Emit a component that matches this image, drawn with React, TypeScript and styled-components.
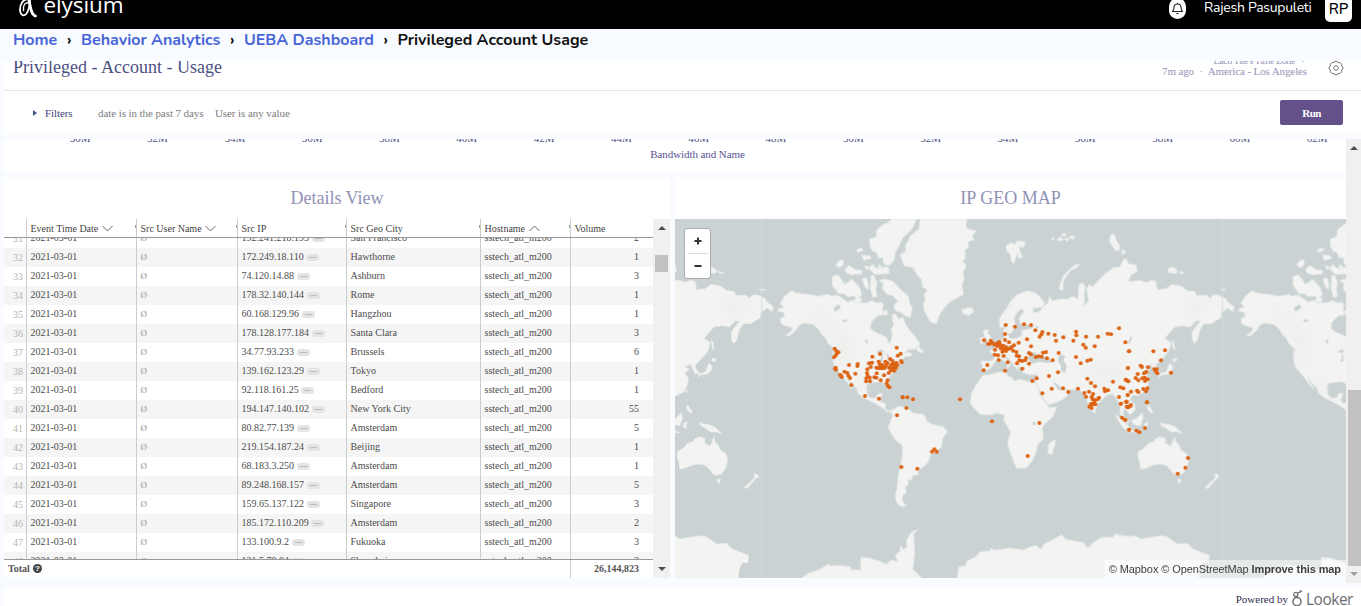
import React from "react";
import styled, { createGlobalStyle } from "styled-components";

const Global = createGlobalStyle`
  * { box-sizing: border-box; }
  html, body { margin: 0; padding: 0; overflow: hidden; background: #f8fbff; }
`;

const serif = `"Liberation Serif", "Times New Roman", serif`;
const rounded = `Nunito, Lato, sans-serif`;

const Page = styled.div`
  width: 1361px;
  height: 606px;
  overflow: hidden;
  display: flex;
  flex-direction: column;
  background: #f8fbff;
  font-family: ${serif};
`;

/* Top bar */
const TopBar = styled.header`
  height: 29px;
  flex: none;
  background: #000;
  color: #fff;
  display: flex;
  align-items: flex-start;
  overflow: hidden;
  padding-left: 18px;
`;
const LogoMark = styled.svg`
  width: 21px;
  height: 18px;
  flex: none;
`;
const Brand = styled.span`
  margin: -9px 0 0 4.5px;
  flex: 1;
  font: 400 22.5px/28px "Open Sans", sans-serif;
  letter-spacing: -0.1px;
`;
const BellBadge = styled.div`
  width: 17px;
  height: 21px;
  margin: -2px 18px 0 0;
  border-radius: 9px;
  background: #fff;
  display: flex;
  align-items: center;
  justify-content: center;
`;
const UserName = styled.span`
  width: 121px;
  white-space: nowrap;
  font: 400 14px/16px ${rounded};
  letter-spacing: -0.27px;
`;
const Avatar = styled.div`
  width: 27px;
  height: 26px;
  margin: -4px 9px 0 0;
  border-radius: 5px;
  background: #fff;
  color: #000;
  text-align: center;
  font: 500 15px/26px ${rounded};
`;

/* Breadcrumb */
const Crumbs = styled.nav`
  height: 32px;
  flex: none;
  padding-left: 13px;
  display: flex;
  font: 700 16px/22px ${rounded};
`;
const Crumb = styled.span<{ $w: number; $current?: boolean }>`
  width: ${(p) => p.$w}px;
  white-space: nowrap;
  color: ${(p) => (p.$current ? "#111" : "#4865d8")};
`;
const Separator = styled.span`
  width: 23px;
  padding-left: 9px;
  color: #111;
`;

/* Dashboard header */
const DashHeader = styled.section`
  height: 30px;
  flex: none;
  margin-left: 4px;
  padding-left: 9px;
  overflow: hidden;
  display: flex;
  background: #fff;
  border-bottom: 1px solid #e3e5e8;
`;
const DashTitle = styled.h1`
  margin: 0;
  flex: 1;
  font: 400 18px/13px ${serif};
  color: #4c5183;
`;
const ZoneBlock = styled.div`
  width: 148px;
  margin: -6px 20px 0 0;
  display: flex;
  flex-direction: column;
  align-items: flex-end;
  color: #9496b6;
  font-size: 11px;
  line-height: 12px;
  letter-spacing: -0.12px;
  white-space: nowrap;
`;
const ZoneSmall = styled.div`
  height: 10px;
  padding: 1px 1px 0 0;
  font-size: 10px;
  line-height: 11px;
  letter-spacing: -0.4px;
  display: flex;
  gap: 5px;
  align-items: center;
`;
const Dot = styled.span`
  margin: 0 2.8px;
`;
const GearButton = styled.span`
  width: 34px;
`;

const FilterBar = styled.section`
  height: 43px;
  flex: none;
  margin-left: 4px;
  padding: 0 18px 0 29px;
  display: flex;
  align-items: center;
  background: #fff;
  font-size: 11px;
  letter-spacing: -0.08px;
  color: #7c7c7c;
  white-space: nowrap;
`;
const Caret = styled.i`
  border-left: 4px solid #3f5590;
  border-top: 3.5px solid transparent;
  border-bottom: 3.5px solid transparent;
`;
const FilterLabel = styled.span`
  width: 53px;
  margin-left: 8px;
  color: #41437c;
`;
const FilterText = styled.span<{ $w?: number }>`
  ${(p) => (p.$w ? `width: ${p.$w}px;` : "flex: 1;")}
`;
const RunButton = styled.button`
  width: 63px;
  height: 25px;
  border: 0;
  padding: 0;
  border-radius: 2px;
  background: #64518a;
  color: #fff;
  font: 700 11px/26px ${serif};
  letter-spacing: -0.6px;
`;

/* Scrolling dashboard area */
const Body = styled.main`
  height: 444px;
  flex: none;
  margin-top: 5px;
  display: flex;
`;
const Tiles = styled.div`
  width: 1346px;
  padding-left: 4px;
`;
const AxisTile = styled.section`
  height: 34px;
  overflow: hidden;
  background: #fff;
  color: #4c4f7c;
  font-size: 11px;
`;
const AxisTicks = styled.div`
  height: 12px;
  margin-top: -7px;
  padding-left: 37.5px;
  display: flex;
  line-height: 12px;
`;
const Tick = styled.span`
  width: 77.32px;
  flex: none;
  text-align: center;
`;
const AxisTitle = styled.div`
  padding: 4px 0 0 45px;
  line-height: 13px;
  letter-spacing: -0.08px;
  text-align: center;
  color: #5a5290;
`;
const TileRow = styled.div`
  display: flex;
  gap: 5px;
  margin-top: 5px;
`;
const Tile = styled.section<{ $w: number }>`
  width: ${(p) => p.$w}px;
  height: 400px;
  background: #fff;
`;
const TileTitle = styled.h2`
  margin: 0;
  height: 41px;
  text-align: center;
  font: 400 18px/41px ${serif};
  color: #9092b6;
`;

/* Details table */
const TableWrap = styled.div`
  display: flex;
  height: 359px;
`;
const Table = styled.div`
  width: 649px;
  font-size: 10px;
  color: #555;
`;
const cols = [22, 110, 101, 109, 134, 90, 83];
const HeadRow = styled.div`
  height: 19px;
  display: grid;
  grid-template-columns: ${cols.map((c) => c + "px").join(" ")};
  border-bottom: 1px solid #999;
  color: #444;
`;
const HeadCell = styled.div<{ $first?: boolean; $tick?: boolean }>`
  display: flex;
  align-items: center;
  gap: 3.5px;
  padding-left: 3.5px;
  border-left: ${(p) => (p.$first ? "0" : "1px solid #ccc")};
  white-space: nowrap;
  &::after {
    content: "";
    display: ${(p) => (p.$tick ? "block" : "none")};
    width: 1px;
    height: 3px;
    margin: -3px 0 0 auto;
    background: #999;
  }
`;
const Rows = styled.div`
  height: 321px;
  overflow: hidden;
`;
const Shift = styled.div`
  margin-top: -9px;
`;
const Row = styled.div<{ $alt: boolean }>`
  height: 19px;
  display: grid;
  grid-template-columns: ${cols.map((c) => c + "px").join(" ")};
  line-height: 17px;
  background: ${(p) => (p.$alt ? "#f5f5f5" : "#fff")};
`;
const Cell = styled.div<{ $muted?: boolean; $right?: boolean }>`
  padding: 0 ${(p) => (p.$right ? 14 : 0)}px ${(p) => (p.$muted ? 0 : 2)}px 3.5px;
  display: flex;
  align-items: center;
  border-left: 1px solid #ccc;
  justify-content: ${(p) => (p.$right ? "flex-end" : "flex-start")};
  color: ${(p) => (p.$muted ? "#999" : "#4c4c4c")};
  font-size: ${(p) => (p.$muted ? 9 : 10)}px;
  white-space: nowrap;
`;
const Num = styled.div`
  padding: 1px 3px 0 0;
  text-align: right;
  color: #b4b4b4;
`;
const Pill = styled.span`
  width: 13px;
  height: 7px;
  margin: 2px 0 0 2.5px;
  border-radius: 3px;
  background: #e4e4e4;
  display: flex;
  align-items: center;
  justify-content: center;
  &::after {
    content: "";
    width: 7px;
    height: 1px;
    background: #bcbcbc;
  }
`;
const TotalRow = styled.div`
  height: 19px;
  border-top: 1px solid #999;
  display: flex;
  font-weight: 700;
  line-height: 18px;
`;
const TotalLabel = styled.div`
  width: 566px;
  padding: 0 0 1px 4px;
  display: flex;
  align-items: center;
  gap: 3px;
`;
const TotalValue = styled.div`
  width: 83px;
  padding-right: 14px;
  border-left: 1px solid #ccc;
  text-align: right;
`;
const Help = styled.span`
  width: 9px;
  height: 9px;
  margin-top: -1px;
  border-radius: 50%;
  background: #444;
  color: #fff;
  text-align: center;
  font: 700 8px/9px "Liberation Sans", sans-serif;
`;

/* Scrollbars */
const Scroll = styled.div<{ $w: number }>`
  width: ${(p) => p.$w}px;
  flex: none;
  display: flex;
  flex-direction: column;
  align-items: center;
  background: #f0f0f0;
`;
const Arrow = styled.i<{ $down?: boolean; $c: string; $top: number }>`
  margin-top: ${(p) => p.$top}px;
  border-left: 4px solid transparent;
  border-right: 4px solid transparent;
  border-${(p) => (p.$down ? "top" : "bottom")}: 4px solid ${(p) => p.$c};
`;
const Thumb = styled.div<{ $top: number; $h: number; $left?: number }>`
  width: 13px;
  height: ${(p) => p.$h}px;
  margin: ${(p) => p.$top}px 0 0 ${(p) => p.$left ?? 0}px;
  background: #c1c1c1;
`;

/* Map */
const MapBox = styled.div`
  position: relative;
  height: 359px;
  background: #cad2d3;
`;
const MapSvg = styled.svg`
  display: block;
  width: 671px;
  height: 359px;
`;
const ZoomControl = styled.div`
  position: absolute;
  left: 9px;
  top: 9px;
  width: 27px;
  height: 51px;
  padding: 0 2px;
  border: 1px solid #a9aeaf;
  border-radius: 3px;
  background: #fff;
`;
const ZoomKey = styled.div<{ $line?: boolean }>`
  height: 24.5px;
  display: flex;
  align-items: center;
  justify-content: center;
  border-bottom: ${(p) => (p.$line ? "1px solid #ddd" : "0")};
`;
const Attribution = styled.div`
  position: absolute;
  right: 0;
  bottom: 0;
  width: 241px;
  height: 18px;
  padding-right: 5px;
  background: rgba(255, 255, 255, 0.5);
  color: #404040;
  text-align: right;
  white-space: nowrap;
  letter-spacing: -0.1px;
  font: 400 11px/18px "Liberation Sans", Arial, sans-serif;
`;

const Footer = styled.footer`
  height: 19px;
  margin: 4px 0 0 4px;
  padding: 4px 9px 0 0;
  background: #fff;
  display: flex;
  align-items: center;
  justify-content: flex-end;
  font-size: 11px;
  color: #2f3050;
  white-space: nowrap;
`;
const LookerMark = styled.svg`
  width: 13px;
  height: 19px;
  margin: -1px 0 0 3px;
`;
const LookerName = styled.span`
  width: 46px;
  margin: 1px 0 0 2px;
  font: 400 15.5px/19px "Open Sans", sans-serif;
  letter-spacing: -0.5px;
  color: #6b6e73;
`;

type Region = { at: [number, number]; shapes: string[] };

/* Map units are one third of a pixel; each region has its own origin. */
const land: Region[] = [
  {
    at: [0, -12],
    shapes: [
      "350,226 360,233 375,236 400,238 430,244 448,240 462,238 466,244 485,240 500,248 518,262 530,256 545,263 575,264 590,256 604,264 618,262 626,270 622,280 626,300 608,302 598,312 588,322 586,340 598,350 620,360 636,368 640,385 646,384 652,360 648,345 657,330 652,316 652,298 660,296 672,312 684,306 690,325 705,348 715,358 730,378 735,388 722,402 700,404 688,414 700,412 712,416 706,424 690,425 680,434 672,452 660,467 648,480 640,492 646,516 638,520 630,505 618,500 600,502 580,504 574,515 576,538 588,550 604,547 608,537 622,534 616,552 618,562 632,566 631,582 640,588 655,582 652,590 636,590 622,578 600,565 585,558 565,548 548,534 545,520 530,506 518,488 512,480 520,498 534,522 526,516 508,490 500,480 488,468 478,454 474,434 474,412 478,402 460,386 452,370 440,358 430,342 415,328 385,324 370,332 366,342 345,362 332,362 348,350 352,338 330,332 318,326 316,310 330,304 326,292 308,288 312,280 326,278 316,264 330,242",
      "690,12 650,12 640,22 625,28 605,45 604,65 584,72 584,92 592,108 604,112 610,128 624,128 626,148 645,150 658,135 660,115 672,92 682,70 712,40 725,12",
      "472,184 488,180 497,190 508,208 520,202 530,192 542,204 554,218 560,238 548,252 536,242 518,245 505,236 490,236 480,222 472,212",
      "482,150 492,138 504,134 506,150 492,158", "510,162 522,152 542,164 560,166 560,176 530,180 514,174",
      "562,192 574,188 580,208 578,224 568,214", "588,182 596,180 606,204 602,222 606,244 594,248 586,222",
      "580,160 592,148 604,160 640,154 642,176 600,178", "545,104 560,98 564,106 548,112", "560,120 584,122 588,130 566,136",
      "612,196 630,192 652,198 664,210 684,230 700,244 704,268 712,276 706,308 690,302 678,292 662,288 656,272 668,258 650,240 636,238 622,220 626,206", "626,288 636,286 638,298 628,300", "535,258 546,246 560,250 556,262",
      "610,164 620,154 612,148", "568,152 580,154 576,166", "108,164 124,166 122,174 108,174", "130,172 146,172 140,176",
    ],
  },
  {
    at: [675, -12],
    shapes: [
      "60,12 200,12 198,38 212,44 230,46 216,62 222,74 204,80 206,98 194,104 196,130 188,138 198,152 190,170 192,194 186,210 190,238 168,250 148,262 132,280 118,300 110,326 92,322 82,304 74,290 70,270 76,254 72,240 82,224 68,216 64,192 50,178 40,158 12,152 6,134 0,120 18,108 16,92 32,62 58,40",
      "184,280 192,284 200,278 216,278 222,290 206,301 190,296", "250,346 266,344 262,354 270,362 274,374 284,382 276,390 258,392 264,380 252,360", "240,370 252,366 254,380 242,388",
      "318,92 338,82 342,92 352,78 376,80 370,98 356,94 366,128 356,130 352,112 342,146 334,140 330,116 320,108",
      "478,216 490,182 508,164 526,150 540,146 532,156 512,166 496,188 488,206 490,226 480,224",
      "452,68 462,70 460,78", "470,72 484,66 490,74 478,78", "484,58 496,54 498,62 488,64", "492,70 508,70 502,80", "508,62 524,64 522,72 510,70",
      "632,60 642,56 650,80 660,92 656,108 646,106 638,94 628,80", "664,102 678,110 668,120", "50,398 56,392 60,402 72,408 64,414 52,408",
      "250,466 243,438 276,438 284,428 268,408 282,400 290,388 304,376 314,368 310,345 320,338 322,360 332,372 350,370 366,362 364,346 390,342 403,334 380,330 364,330 356,312 372,290 366,280 350,292 342,312 346,330 336,352 326,356 314,335 300,338 298,312 306,298 322,278 330,260 350,240 380,228 404,232 420,246 434,264 428,276 398,280 400,294 418,290 430,276 444,264 448,244 456,258 480,252 502,252 520,244 534,254 536,210 548,202 556,218 552,240 554,260 550,276 566,258 560,222 568,208 578,216 600,192 620,172 640,158 660,156 670,134 680,132 684,146 708,150 712,168 692,182 685,200 720,196 740,202 755,195 768,200 772,226 784,222 796,222 816,208 845,214 860,226 885,230 890,242 920,240 930,250 940,240 955,240 976,250 984,262 1003,276 998,290 984,280 964,292 964,308 946,318 936,326 912,326 900,344 892,376 882,386 876,372 876,352 888,334 902,318 888,318 870,336 850,332 824,336 810,352 794,370 812,382 808,404 796,422 780,438 768,450 770,462 780,474 768,478 760,460 754,448 736,454 750,464 736,474 748,490 744,510 734,530 712,542 698,540 690,554 704,570 706,584 690,600 674,580 668,592 674,608 686,618 684,626 668,610 660,594 660,574 650,550 636,536 620,540 604,556 590,568 588,582 578,592 566,572 558,548 546,530 530,524 500,524 486,520 468,504 458,500 474,524 506,528 500,544 480,558 446,570 432,552 420,528 406,500 412,478 390,480 368,472 364,460 354,450 356,468 340,450 322,426 316,428 332,448 320,462 322,450 306,432 288,436 276,454 260,468",
      "250,480 268,480 290,472 318,470 322,482 336,488 344,500 358,492 384,500 400,498 412,516 420,538 434,560 448,578 470,576 458,606 434,626 426,640 430,672 412,690 408,712 396,738 380,758 350,760 336,726 322,684 332,652 324,636 312,618 312,600 292,594 270,600 240,598 222,580 211,564 214,536 228,510",
    ],
  },
  {
    at: [1350, -12],
    shapes: [
      "128,162 142,156 156,164 154,172 132,174", "160,168 178,174 164,174", "288,222 300,222 300,226 288,226",
      "140,374 146,382 150,404 144,402", "145,428 158,434 148,441 143,436", "134,444 143,454 140,468 128,478 108,480 102,488 104,476 124,470",
      "64,525 70,527 66,534",
    ],
  },
  {
    at: [675, 543],
    shapes: [
      "-28,36 -14,24 0,18 22,24 40,40 66,42 76,48 80,64 100,74 130,80 142,94 128,116 124,140 112,152 92,164 84,186 68,202 54,212 54,224 36,228 36,238 22,240 26,252 14,262 20,276 8,286 6,300 18,318 4,320 -10,308 -14,286 -8,260 -6,230 2,194 8,162 6,136 -14,120 -24,104 -36,82 -28,64 -22,46",
      "444,160 446,132 466,118 464,134 456,164", "580,28 587,30 586,39 581,36", "645,42 660,54 678,70 692,88 688,98 672,86 656,64",
      "-300,538 -276,520 -240,508 -214,492 -208,498 -180,496 -150,500 -144,512 -136,508 -118,512 -118,472 -92,474 -60,484 -40,494 -28,480 -6,486 -14,466 0,454 2,436 10,448 20,442 20,420 34,396 54,388 40,402 44,460 38,508 70,538",
      "172,538 176,500 196,498 200,484 228,470 240,456 270,452 274,444 280,450 310,448 326,444 370,450 386,442 406,436 424,448 432,432 456,420 486,404 496,418 552,428 562,444 580,428 604,412 640,412 644,402 660,406 690,410 705,407 722,417 745,413 785,407 800,410 815,420 832,432 862,430 876,445 896,454 928,466 926,488 910,488 900,506 896,538",
    ],
  },
  {
    at: [1350, 543],
    shapes: [
      "18,62 34,56 52,38 54,54 46,78 28,74", "-2,84 20,88 46,98 30,98 4,92", "58,70 70,66 64,78 68,84 58,84", "70,14 84,36 78,40 66,24", "106,66 116,72 130,72 150,80 174,102 158,96 138,96 122,84 108,76",
      "40,154 58,144 70,130 84,126 94,114 106,110 122,116 120,128 136,138 142,128 148,110 154,128 162,134 166,148 186,162 190,184 184,204 172,222 154,226 144,220 134,206 122,196 104,192 82,196 64,204 46,208 44,188 38,168",
      "158,237 168,238 166,249 160,248", "270,220 284,228 272,238 262,250 248,266 240,262 258,246 270,234",
    ],
  },
];

const water: Region[] = [
  { at: [675, -12], shapes: ["384,430 390,418 404,412 412,420 428,424 448,430 456,442 440,444 418,440 396,446", "476,424 486,418 496,424 490,436 500,452 496,472 484,470 482,450 474,438", "684,382 694,362 697,370 688,386", "406,332 418,334 410,342"] },
  { at: [0, -12], shapes: ["476,278 490,268 498,276 488,286 478,290", "502,316 514,312 518,318 506,322", "570,374 578,376 578,386 572,384", "604,412 618,402 628,410 618,414", "620,420 624,416 622,440 614,442", "632,414 642,420 640,434"] },
  { at: [675, 543], shapes: ["398,66 408,66 406,75 398,75"] },
];

const relief: Region[] = [
  { at: [0, -12], shapes: ["400,290 440,280 480,330 520,350 530,420 500,460 486,430 480,380 440,320", "545,470 570,500 575,540 550,520"] },
  { at: [675, -12], shapes: ["540,450 620,430 680,470 640,510 570,490", "330,270 350,250 330,300 308,320", "860,250 940,260 900,300 840,290"] },
];

const points: { at: [number, number]; list: string }[] = [
  { at: [0, -12], list: "479,401 484,408 490,412 483,420 477,427 486,415 482,458 483,464 480,461 495,480 500,486 498,482 508,470 517,474 520,482 525,489 529,510 522,450 548,447 547,453 541,476 592,425 615,417 665,398 677,416 668,422 582,445 591,443 587,456 577,463 576,474 578,482 574,490 584,488 573,499 585,499 598,487 604,488 605,475 604,458 611,440 614,448 622,450 616,456 624,459 631,440 637,444 630,456 634,450 645,432 652,437 655,445 648,450 642,458 660,450 667,450 663,458 655,465 647,467 641,474 627,481 617,496 638,496 635,505 638,512 643,517 678,438 680,442 570,543 612,551 683,547 658,467 650,460 611,460 618,460 628,459 664,444 658,455" },
  { at: [675, -12], list: "8,547 22,547 39,553 180,553 317,330 345,335 372,328 393,330 315,357 406,346 427,351 424,358 419,365 445,356 464,360 468,377 490,367 528,350 529,361 520,377 558,365 594,365 623,356 633,358 657,340 676,382 687,409 252,376 381,373 356,383 327,382 315,375 342,391 335,396 393,394 550,389 557,398 584,394 476,414 528,426 542,445 562,437 572,434 458,436 441,430 438,411 429,413 425,425 416,424 407,426 393,418 387,414 378,429 375,436 387,446 366,438 358,436 351,445 357,424 349,411 350,422 367,461 315,467 323,442 296,435 262,450 251,466 284,419 294,421 311,423 285,404 264,387 272,377 277,383 283,389 290,386 297,381 292,393 300,390 305,395 309,401 302,400 307,410 314,404 319,397 323,403 330,400 318,408 339,407 270,386 310,392 299,384 397,498 410,490 447,483 474,472 455,521 427,535 489,520 505,531 534,521 562,491 573,504 585,514 553,534 558,545 567,530 579,537 575,546 578,553 585,556 597,548 594,552 613,521 615,529 624,526 639,500 661,517 670,520 677,494 684,499 684,459 657,546 683,540 679,560 663,566 574,567 584,567" },
  { at: [1350, -12], list: "12,409 85,409 120,406 108,436 9,459 47,452 51,456 69,457 88,463 95,463 93,470 97,475 138,473 64,470 57,475 38,477 32,489 40,496 52,490 59,488 68,493 60,498 3,494 10,499 18,530 36,527 40,531 55,522 67,520 63,529 8,540 4,560 66,562 17,570" },
  { at: [0, 543], list: "666,46 679,201" },
  { at: [675, 543], list: "19,24 103,148 96,155 110,155 52,206 276,64 418,69 383,168 573,12 580,12 568,20 575,24 584,2 586,13 662,11 678,5 680,20 685,22 666,53 675,59 687,89" },
  { at: [1350, 543], list: "5,5 8,22 17,17 66,7 1,60 12,89 34,92 43,97 60,84 189,174 181,203 158,221" },
];

const Shapes = ({ data, fill, stroke }: { data: Region[]; fill: string; stroke?: string }) => (
  <>
    {data.map((r, i) => (
      <g key={i} transform={`translate(${r.at[0]} ${r.at[1]})`} fill={fill} stroke={stroke} strokeWidth={stroke ? 2 : 0} strokeLinejoin="round">
        {r.shapes.map((s, k) => <polygon key={k} points={s} />)}
      </g>
    ))}
  </>
);

const WorldMap = () => (
  <MapSvg viewBox="0 0 2013 1077">
    <defs>
      <filter id="soft"><feGaussianBlur stdDeviation="12" /></filter>
      <g id="world">
        <Shapes data={land} fill="#f3f4f2" stroke="#e6eae9" />
        <g filter="url(#soft)" opacity="0.5"><Shapes data={relief} fill="#eaebe9" /></g>
        <Shapes data={water} fill="#cad2d3" />
      </g>
    </defs>
    <use href="#world" x="-1382" />
    <use href="#world" />
    <use href="#world" x="1382" />
    <path d="M260 0V1077M1642 0V1077" stroke="#d6dddd" strokeWidth="3" />
    {points.map((g, i) => (
      <g key={i} transform={`translate(${g.at[0]} ${g.at[1]})`} fill="#dc6313">
        {g.list.split(" ").map((p, k) => {
          const [x, y] = p.split(",");
          return <circle key={k} cx={x} cy={y} r="6" />;
        })}
      </g>
    ))}
  </MapSvg>
);

const rows: [number, string, string, number][] = [
  [31, "192.241.218.195", "San Francisco", 2],
  [32, "172.249.18.110", "Hawthorne", 1],
  [33, "74.120.14.88", "Ashburn", 3],
  [34, "178.32.140.144", "Rome", 1],
  [35, "60.168.129.96", "Hangzhou", 1],
  [36, "178.128.177.184", "Santa Clara", 3],
  [37, "34.77.93.233", "Brussels", 6],
  [38, "139.162.123.29", "Tokyo", 1],
  [39, "92.118.161.25", "Bedford", 1],
  [40, "194.147.140.102", "New York City", 55],
  [41, "80.82.77.139", "Amsterdam", 5],
  [42, "219.154.187.24", "Beijing", 1],
  [43, "68.183.3.250", "Amsterdam", 1],
  [44, "89.248.168.157", "Amsterdam", 5],
  [45, "159.65.137.122", "Singapore", 3],
  [46, "185.172.110.209", "Amsterdam", 2],
  [47, "133.100.9.2", "Fukuoka", 3],
  [48, "121.5.78.84", "Shanghai", 2],
];

const Chevron = ({ up }: { up?: boolean }) => (
  <svg width="11" height="7" viewBox="0 0 11 7" fill="none" stroke="#666" strokeWidth="1">
    <path d={up ? "M.5 6L5.5 1L10.5 6" : "M.5 1L5.5 6L10.5 1"} />
  </svg>
);

const ticks = Array.from({ length: 17 }, (_, i) => 30 + i * 2);

export default function App() {
  return (
    <Page>
      <Global />
      <TopBar>
        <LogoMark viewBox="0 0 21 18" fill="none" stroke="#fff" strokeLinecap="round">
          <path d="M10.5 -1C5 -1 2 4 2 9.5C2 13.5 3.8 15.5 6 15.3C9 15 10.6 10 11.5 5.5C12 3 12 0 11.5 -2" strokeWidth="1.8" />
          <path d="M10.5 -1C12.4 4 12.3 14.6 17.5 16" strokeWidth="2.8" />
          <path d="M5.5 10.5C5 5 7 2.5 9.5 3" strokeWidth="1.4" />
        </LogoMark>
        <Brand>elysium</Brand>
        <BellBadge>
          <svg width="13" height="13" viewBox="0 0 13 13" fill="none" stroke="#222" strokeWidth="1.1" strokeLinejoin="round">
            <path d="M1.5 9.5C3 8 3 7 3 5.5C3 3.5 4.5 2 6.5 2S10 3.5 10 5.5C10 7 10 8 11.5 9.5ZM5.5 11.5H7.5M6.5 2V.8" />
          </svg>
        </BellBadge>
        <UserName>Rajesh Pasupuleti</UserName>
        <Avatar>RP</Avatar>
      </TopBar>
      <Crumbs>
        <Crumb $w={45}>Home</Crumb>
        <Separator>›</Separator>
        <Crumb $w={140}>Behavior Analytics</Crumb>
        <Separator>›</Separator>
        <Crumb $w={130.5}>UEBA Dashboard</Crumb>
        <Separator>›</Separator>
        <Crumb $w={200} $current>Privileged Account Usage</Crumb>
      </Crumbs>
      <DashHeader>
        <DashTitle>Privileged - Account - Usage</DashTitle>
        <ZoneBlock>
          <ZoneSmall>
            Each Tile's Time Zone
            <svg width="6" height="5" viewBox="0 0 6 5" fill="none" stroke="#9496b6"><path d="M1 1L3 3.5L5 1" /></svg>
          </ZoneSmall>
          <div>7m ago <Dot>·</Dot> America - Los Angeles</div>
        </ZoneBlock>
        <GearButton>
          <svg width="20" height="15" viewBox="0 0 20 15" fill="none" stroke="#77726f" strokeWidth="1">
            <path d="M8.4 .7H11.3L12.1 2.2L13.8 1.7L15.8 3.7L15.3 5.3L16.8 6.1V8.6L15.3 9.4L15.8 11L13.8 13L12.1 12.5L11.3 14H8.7L7.9 12.5L6.2 13L4.2 11L4.7 9.4L3.2 8.6V6.1L4.7 5.3L4.2 3.7L6.2 1.7L7.9 2.2Z" transform="translate(-1 -.3)" strokeLinejoin="round" />
            <circle cx="9" cy="7.1" r="2.3" />
          </svg>
        </GearButton>
      </DashHeader>
      <FilterBar>
        <Caret />
        <FilterLabel>Filters</FilterLabel>
        <FilterText $w={117}>date is in the past 7 days</FilterText>
        <FilterText>User is any value</FilterText>
        <RunButton>Run</RunButton>
      </FilterBar>
      <Body>
        <Tiles>
          <AxisTile>
            <AxisTicks>{ticks.map((t) => <Tick key={t}>{t}M</Tick>)}</AxisTicks>
            <AxisTitle>Bandwidth and Name</AxisTitle>
          </AxisTile>
          <TileRow>
            <Tile $w={666}>
              <TileTitle>Details View</TileTitle>
              <TableWrap>
                <Table>
                  <HeadRow>
                    <HeadCell $first />
                    <HeadCell $tick>Event Time Date <Chevron /></HeadCell>
                    <HeadCell $tick>Src User Name <Chevron /></HeadCell>
                    <HeadCell $tick>Src IP</HeadCell>
                    <HeadCell $tick>Src Geo City</HeadCell>
                    <HeadCell $tick>Hostname <Chevron up /></HeadCell>
                    <HeadCell>Volume</HeadCell>
                  </HeadRow>
                  <Rows>
                    <Shift>
                      {rows.map(([n, ip, city, v]) => (
                        <Row key={n} $alt={n % 2 === 0}>
                          <Num>{n}</Num>
                          <Cell>2021-03-01</Cell>
                          <Cell $muted>Ø</Cell>
                          <Cell>{ip}<Pill /></Cell>
                          <Cell>{city}</Cell>
                          <Cell>sstech_atl_m200</Cell>
                          <Cell $right>{v}</Cell>
                        </Row>
                      ))}
                    </Shift>
                  </Rows>
                  <TotalRow>
                    <TotalLabel>Total <Help>?</Help></TotalLabel>
                    <TotalValue>26,144,823</TotalValue>
                  </TotalRow>
                </Table>
                <Scroll $w={17}>
                  <Arrow $top={7} $c="#4d4d4d" />
                  <Thumb $top={25} $h={17} />
                  <Arrow $top={295} $down $c="#4d4d4d" />
                </Scroll>
              </TableWrap>
            </Tile>
            <Tile $w={671}>
              <TileTitle>IP GEO MAP</TileTitle>
              <MapBox>
                <WorldMap />
                <ZoomControl>
                  <ZoomKey $line>
                    <svg width="8" height="8" stroke="#333" strokeWidth="2"><path d="M.5 4H7.5M4 .5V7.5" /></svg>
                  </ZoomKey>
                  <ZoomKey>
                    <svg width="8" height="8" stroke="#333" strokeWidth="2"><path d="M.5 4H7.5" /></svg>
                  </ZoomKey>
                </ZoomControl>
                <Attribution>© Mapbox © OpenStreetMap <b>Improve this map</b></Attribution>
              </MapBox>
            </Tile>
          </TileRow>
        </Tiles>
        <Scroll $w={15}>
          <Arrow $top={7} $c="#4d4d4d" />
          <Thumb $top={240} $h={176} $left={2} />
          <Arrow $top={6} $down $c="#a0a0a0" />
        </Scroll>
      </Body>
      <Footer>
        Powered by
        <LookerMark viewBox="0 0 13 19" fill="none" stroke="#6b6e73" strokeWidth="1.5">
          <circle cx="6" cy="12.6" r="4.1" />
          <circle cx="4.8" cy="5.4" r="2" strokeWidth="1.2" />
          <path d="M5.6 7.4L6.3 8.5M6.4 4.2L9.6 2.6" strokeWidth="1.2" />
          <circle cx="9.8" cy="2.3" r=".8" strokeWidth="1" />
        </LookerMark>
        <LookerName>Looker</LookerName>
      </Footer>
    </Page>
  );
}
